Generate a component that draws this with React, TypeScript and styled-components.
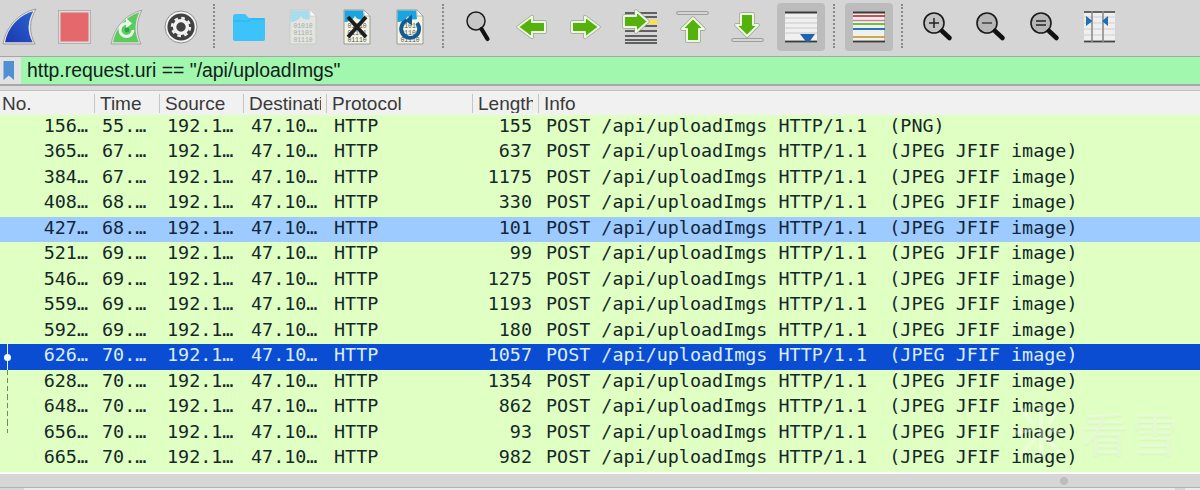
import React from 'react';
import styled, { createGlobalStyle } from 'styled-components';

const Global = createGlobalStyle`
  html, body { margin: 0; padding: 0; background: #d6d6d6; }
  #root { width: 1200px; height: 490px; overflow: hidden; }
`;

const Page = styled.div`
  position: relative;
  width: 1200px;
  height: 490px;
  overflow: hidden;
  display: flex;
  flex-direction: column;
  background: #d6d6d6;
  font-family: "Liberation Sans", Arial, sans-serif;
`;

const Toolbar = styled.div`
  height: 56px;
  box-sizing: border-box;
  padding: 3px 0 0 0;
  display: flex;
  align-items: flex-start;
  background: #d5d5d5;
  margin-left: -4px;
  width: 1204px;
`;

const Group = styled.div`
  display: flex;
  gap: 5.65px;
`;

const Slot = styled.div<{ $active?: boolean }>`
  width: 48px;
  height: 48px;
  border-radius: 4px;
  background: ${p => (p.$active ? '#bcbcbc' : 'transparent')};
  svg { display: block; }
`;

const Separator = styled.div`
  width: 0;
  height: 44px;
  margin: 1px 10.5px 0 8px;
  border-left: 2px dotted #8a8a8a;
`;

const FilterBar = styled.div`
  height: 27px;
  display: flex;
  align-items: stretch;
  border-top: 1px solid #a6a6a6;
  border-bottom: 2px solid #a8a8a8;
  background: #e2e2e2;
`;

const Bookmark = styled.div`
  width: 21px;
  padding: 3px 0 0 3px;
  box-sizing: border-box;
`;

const FilterInput = styled.div`
  flex: 1;
  background: #a2f7ae;
  color: #10201a;
  font-size: 19.4px;
  line-height: 27px;
  padding-left: 6px;
  white-space: pre;
`;

const Spacer = styled.div`
  height: 5px;
  background: #dcdcdc;
  border-bottom: 1px solid #c4c4c4;
  box-sizing: border-box;
`;

const columns = '94px 65px 84px 83px 146px 66px 1fr';

const Header = styled.div`
  height: 24px;
  display: grid;
  grid-template-columns: ${columns};
  background: #f1f1f1;
  color: #3a3a3a;
  font-size: 19px;
`;

const HeaderCell = styled.div<{ $first?: boolean }>`
  box-sizing: border-box;
  padding: 0 5px 0 ${p => (p.$first ? 2 : 5)}px;
  border-left: ${p => (p.$first ? 'none' : '1px solid #c6c6c6')};
  height: 19px;
  margin-top: 3px;
  line-height: 19px;
  min-width: 0;
`;

const HeaderLabel = styled.div`
  overflow: hidden;
  white-space: nowrap;
`;

const List = styled.div`
  height: 357px;
  display: flex;
  flex-direction: column;
  background: #e0ffc3;
`;

type Tone = 'plain' | 'light' | 'dark';

const rowBg: Record<Tone, string> = { plain: '#e0ffc3', light: '#9dcbff', dark: '#0a4cd2' };
const rowFg: Record<Tone, string> = { plain: '#14282a', light: '#12263a', dark: '#dcecff' };

const Row = styled.div<{ $tone: Tone }>`
  position: relative;
  flex: 0 0 25.47px;
  display: grid;
  grid-template-columns: ${columns};
  background: ${p => rowBg[p.$tone]};
  color: ${p => rowFg[p.$tone]};
  font-family: "DejaVu Sans Mono", "Liberation Mono", monospace;
  font-size: 18.4px;
  line-height: 22px;
  white-space: pre;
`;

const Cell = styled.div<{ $right?: boolean }>`
  text-align: ${p => (p.$right ? 'right' : 'left')};
  padding-left: ${p => (p.$right ? 0 : 8)}px;
  padding-right: ${p => (p.$right ? 6 : 0)}px;
  min-width: 0;
`;

const Link = styled.div<{ $dashed?: boolean; $short?: boolean }>`
  position: absolute;
  left: 7px;
  top: 0;
  width: 1px;
  height: ${p => (p.$short ? '50%' : '100%')};
  background: ${p =>
    p.$dashed
      ? 'repeating-linear-gradient(to bottom, #6f8a6a 0 5px, transparent 5px 8px)'
      : '#e8f2ff'};
`;

const Dot = styled.div`
  position: absolute;
  left: 4px;
  top: 10px;
  width: 7px;
  height: 7px;
  border-radius: 50%;
  background: #f4f8ff;
`;

const Edge = styled.div`
  height: 2px;
  background: #fafafa;
`;

const Scrollbar = styled.div`
  height: 13px;
  background: #d6d6d6;
  display: flex;
  justify-content: center;
  align-items: center;
  padding-left: 928px;
`;

const Thumb = styled.div`
  width: 8px;
  height: 8px;
  border-radius: 50%;
  background: #bdbdbd;
`;

const Footer = styled.div`
  flex: 1;
  display: flex;
  border-top: 1px solid #b4b4b4;
  background: #d6d6d6;
`;

const FooterPanel = styled.div`
  margin-left: 24px;
  flex: 1;
  background: #ececec;
`;

const FooterGap = styled.div`
  width: 10px;
  background: #d6d6d6;
`;

const FooterEnd = styled.div`
  width: 15px;
  background: #ececec;
`;

const Watermark = styled.div`
  position: absolute;
  left: 1012px;
  top: 402px;
  display: flex;
  align-items: center;
  gap: 12px;
  color: rgba(255, 255, 255, 0.36);
  font-family: "Noto Sans CJK SC", sans-serif;
  font-size: 46px;
  line-height: 58px;
  letter-spacing: 4px;
  text-shadow: 0 1px 2px rgba(60, 90, 40, 0.06);
  pointer-events: none;
`;

const Svg: React.FC<{ children: React.ReactNode }> = ({ children }) => (
  <svg width="48" height="48" viewBox="0 0 48 48" fill="none" xmlns="http://www.w3.org/2000/svg">
    {children}
  </svg>
);

const Lens: React.FC<{ fill: string; mark?: React.ReactNode }> = ({ fill, mark }) => (
  <Svg>
    <circle cx="20" cy="20" r="10" fill={fill} stroke="#1a1a1a" strokeWidth="1.6" />
    <path d="M28 28 L35.5 35" stroke="#111" strokeWidth="4.6" strokeLinecap="round" />
    {mark}
  </Svg>
);

const GreenArrow: React.FC<{ d: string }> = ({ d }) => (
  <>
    <path d={d} stroke="#97a58b" strokeWidth="3.4" strokeLinejoin="round" />
    <path d={d} fill="#55b20c" stroke="#eef7e2" strokeWidth="2" strokeLinejoin="round" />
  </>
);

const FileIcon: React.FC<{ top: string; faded?: boolean; children?: React.ReactNode }> = ({ top, faded, children }) => (
  <>
    <path d="M11 7 H31 L37 13 V41 H11 Z" fill={faded ? '#e3e5e1' : '#f3f3e4'} stroke={faded ? '#c9cbc7' : '#9b9b92'} strokeWidth="1" />
    <path d="M11.5 7.5 H30 L31 16 C27 17 24 17 22 13 C20 17 15 19 11.5 19 Z" fill={top} />
    <path d="M31 7 V13 H37 Z" fill="#fff" stroke={faded ? '#c9cbc7' : '#9b9b92'} strokeWidth="0.7" />
    <text x="24" y="24.5" textAnchor="middle" fontSize="6.4" fontFamily="Liberation Mono, monospace" fill={faded ? '#a9aca8' : '#555'}>01010</text>
    <text x="24" y="31.5" textAnchor="middle" fontSize="6.4" fontFamily="Liberation Mono, monospace" fill={faded ? '#a9aca8' : '#555'}>01101</text>
    <text x="24" y="38.5" textAnchor="middle" fontSize="6.4" fontFamily="Liberation Mono, monospace" fill={faded ? '#a9aca8' : '#555'}>01110</text>
    {children}
  </>
);

const Fin = () => (
  <Svg>
    <defs>
      <linearGradient id="fin" x1="0" y1="1" x2="1" y2="0">
        <stop offset="0" stopColor="#1c36ad" />
        <stop offset="1" stopColor="#2a66d6" />
      </linearGradient>
    </defs>
    <path d="M8 40 C11 24 22 11 39 7 C32 18 32 30 38 40 Z" fill="url(#fin)" stroke="#e6e6e6" strokeWidth="1.6" strokeLinejoin="round" />
    <path d="M7 41 C10 24 22 10 40 6 C33 18 33 30 39 41 Z" stroke="#8e8e8e" strokeWidth="0.8" strokeLinejoin="round" />
  </Svg>
);

const Stop = () => (
  <Svg>
    <rect x="9.5" y="8.5" width="30" height="31" fill="#e5686c" stroke="#dcdcdc" strokeWidth="2" />
    <rect x="8.5" y="7.5" width="32" height="33" stroke="#a8a8a8" strokeWidth="0.8" />
  </Svg>
);

const RestartFin = () => (
  <Svg>
    <path d="M9 40 C12 25 21 13 38 8 C32 19 32 30 37 40 Z" fill="#5ccb5e" stroke="#e0e0e0" strokeWidth="1.6" strokeLinejoin="round" />
    <path d="M8 41 C11 25 21 12 39 7 C33 19 33 30 38 41 Z" stroke="#9a9a9a" strokeWidth="0.8" strokeLinejoin="round" />
    <path d="M30 27 A6.5 6.5 0 1 1 24 20.5" stroke="#e9f7e6" strokeWidth="3" />
    <path d="M23 15 L29 20.5 L23 25.5 Z" fill="#e9f7e6" />
    <circle cx="24" cy="27" r="2.4" fill="#2fa24a" />
  </Svg>
);

const Gear = () => (
  <Svg>
    <circle cx="24" cy="24" r="16" fill="#f4f4f4" stroke="#8f8f8f" strokeWidth="1" />
    <circle cx="24" cy="24" r="13.6" fill="#414141" />
    <circle cx="24" cy="24" r="6.4" stroke="#f2f2f2" strokeWidth="3.4" />
    <circle cx="24" cy="24" r="9" stroke="#f2f2f2" strokeWidth="2.4" strokeDasharray="3.6 3.47" />
  </Svg>
);

const Folder = () => (
  <Svg>
    <path d="M8 14 Q8 11 11 11 H20 L24 15 H38 Q40 15 40 17 V36 Q40 38 38 38 H10 Q8 38 8 36 Z" fill="#3cc3f9" />
    <path d="M8 18 H24 L26 16 H40" stroke="#2aa9e4" strokeWidth="0.8" />
  </Svg>
);

const Capture = () => (
  <Svg>
    <FileIcon top="#a9dcec" faded />
  </Svg>
);

const CloseFile = () => (
  <Svg>
    <FileIcon top="#1aa4e0">
      <path d="M15 14 L33 34 M33 14 L15 34" stroke="#1d1d1d" strokeWidth="3.8" />
    </FileIcon>
  </Svg>
);

const ReloadFile = () => (
  <Svg>
    <FileIcon top="#1aa4e0">
      <path d="M20.5 17.6 A9 9 0 1 0 31 20" stroke="#125c96" strokeWidth="3.8" />
      <path d="M26 11.5 L19 17.5 L26 22.5 Z" fill="#125c96" />
    </FileIcon>
  </Svg>
);

const LinesIcon: React.FC<{ ys: [number, string, number][] }> = ({ ys }) => (
  <>
    {ys.map(([y, c, w], i) => (
      <path key={i} d={`M8 ${y} H40`} stroke={c} strokeWidth={w} />
    ))}
  </>
);

const Icons: Record<string, React.ReactNode> = {
  fin: <Fin />,
  stop: <Stop />,
  restart: <RestartFin />,
  gear: <Gear />,
  folder: <Folder />,
  capture: <Capture />,
  close: <CloseFile />,
  reload: <ReloadFile />,
  find: (
    <Svg>
      <circle cx="21" cy="18" r="9" fill="#c6c6c6" stroke="#1b1b1b" strokeWidth="1.5" />
      <path d="M26.5 26 L32.5 36" stroke="#111" strokeWidth="4.2" strokeLinecap="round" />
    </Svg>
  ),
  prev: (
    <Svg>
      <GreenArrow d="M10 24 L24 13.5 V19 H37 V29 H24 V34.5 Z" />
    </Svg>
  ),
  next: (
    <Svg>
      <GreenArrow d="M37 24 L23 13.5 V19 H10 V29 H23 V34.5 Z" />
    </Svg>
  ),
  jump: (
    <Svg>
      <path d="M9 10 H41 M9 14 H41 M9 23 H41 M9 28 H41 M9 33 H41 M9 37 H41 M9 40 H41" stroke="#3a3a3a" strokeWidth="1.6" />
      <path d="M33 19 H41" stroke="#ffe23a" strokeWidth="4" />
      <GreenArrow d="M32 18.5 L20 8 V13 H8 V24 H20 V29 Z" />
    </Svg>
  ),
  first: (
    <Svg>
      <path d="M9 10 H38" stroke="#8a8a8a" strokeWidth="3.4" strokeLinecap="round" />
      <path d="M9 10 H38" stroke="#efefef" strokeWidth="1.6" strokeLinecap="round" />
      <GreenArrow d="M24 15 L35 26 H30 V38 H18 V26 H13 Z" />
    </Svg>
  ),
  last: (
    <Svg>
      <path d="M10 37 H39" stroke="#8a8a8a" strokeWidth="3.4" strokeLinecap="round" />
      <path d="M10 37 H39" stroke="#efefef" strokeWidth="1.6" strokeLinecap="round" />
      <GreenArrow d="M24 33 L13 22 H18 V11 H30 V22 H35 Z" />
    </Svg>
  ),
  autoscroll: (
    <Svg>
      <rect x="8" y="9" width="32" height="30" fill="#f0f0f0" />
      <LinesIcon
        ys={[
          [9.5, '#3a3a3a', 2],
          [15, '#c8c8c8', 1],
          [20, '#c8c8c8', 1],
          [25, '#c8c8c8', 1],
          [30, '#c8c8c8', 1],
          [38.5, '#3a3a3a', 1.8],
        ]}
      />
      <path d="M23 31 H38 L33 38 Q31 40 28.5 38 Z" fill="#1f63ad" />
    </Svg>
  ),
  colorize: (
    <Svg>
      <rect x="8" y="9" width="31" height="30" fill="#f0f0f0" />
      <LinesIcon
        ys={[
          [9.5, '#3a3a3a', 2],
          [13, '#d03a3a', 1.8],
          [17.5, '#d878a8', 1.4],
          [21, '#55c21d', 1.8],
          [26, '#2a72b8', 2],
          [34, '#c9a13a', 1.8],
          [38.5, '#3a3a3a', 1.8],
        ]}
      />
    </Svg>
  ),
  zoomIn: (
    <Lens
      fill="#c2c2c2"
      mark={<path d="M15 20 H25 M20 15 V25" stroke="#222" strokeWidth="1.5" />}
    />
  ),
  zoomOut: <Lens fill="#b6b6b6" mark={<path d="M15 20 H25" stroke="#444" strokeWidth="1.6" />} />,
  zoomReset: (
    <Lens fill="#b6b6b6" mark={<path d="M15 18 H25 M15 22 H25" stroke="#222" strokeWidth="1.7" />} />
  ),
  resize: (
    <Svg>
      <rect x="9" y="8" width="31" height="31" fill="#efefef" />
      <path d="M9 9 H40" stroke="#555" strokeWidth="1.8" />
      <path d="M9 14 H40 M9 20 H40 M9 26 H40 M9 32 H40" stroke="#cfcfcf" strokeWidth="1" />
      <path d="M9 38.5 H40" stroke="#444" strokeWidth="1.8" />
      <path d="M17 8 V39 M28 8 V39" stroke="#8c8c8c" strokeWidth="1.6" />
      <path d="M11 13 L17.5 18 L11 23 Z M33 13 L27 18 L33 23 Z" fill="#1f6fb3" />
    </Svg>
  ),
};

const groups: { id: string; active?: boolean }[][] = [
  [{ id: 'fin' }, { id: 'stop' }, { id: 'restart' }, { id: 'gear' }],
  [{ id: 'folder' }, { id: 'capture' }, { id: 'close' }, { id: 'reload' }],
  [
    { id: 'find' },
    { id: 'prev' },
    { id: 'next' },
    { id: 'jump' },
    { id: 'first' },
    { id: 'last' },
    { id: 'autoscroll', active: true },
  ],
  [{ id: 'colorize', active: true }],
  [{ id: 'zoomIn' }, { id: 'zoomOut' }, { id: 'zoomReset' }, { id: 'resize' }],
];

const headers = ['No.', 'Time', 'Source', 'Destination', 'Protocol', 'Length', 'Info'];

const jpeg = 'POST /api/uploadImgs HTTP/1.1  (JPEG JFIF image)';
const rows: { no: string; time: string; len: string; info?: string; tone?: Tone }[] = [
  { no: '156…', time: '55.…', len: '155', info: 'POST /api/uploadImgs HTTP/1.1  (PNG)' },
  { no: '365…', time: '67.…', len: '637' },
  { no: '384…', time: '67.…', len: '1175' },
  { no: '408…', time: '68.…', len: '330' },
  { no: '427…', time: '68.…', len: '101', tone: 'light' },
  { no: '521…', time: '69.…', len: '99' },
  { no: '546…', time: '69.…', len: '1275' },
  { no: '559…', time: '69.…', len: '1193' },
  { no: '592…', time: '69.…', len: '180' },
  { no: '626…', time: '70.…', len: '1057', tone: 'dark' },
  { no: '628…', time: '70.…', len: '1354' },
  { no: '648…', time: '70.…', len: '862' },
  { no: '656…', time: '70.…', len: '93' },
  { no: '665…', time: '70.…', len: '982' },
];

export default function App() {
  return (
    <Page>
      <Global />
      <Toolbar>
        {groups.map((g, i) => (
          <React.Fragment key={i}>
            {i > 0 && <Separator />}
            <Group>
              {g.map(b => (
                <Slot key={b.id} $active={b.active}>
                  {Icons[b.id]}
                </Slot>
              ))}
            </Group>
          </React.Fragment>
        ))}
      </Toolbar>
      <FilterBar>
        <Bookmark>
          <svg width="12" height="21" viewBox="0 0 12 21">
            <path d="M0.5 1 H11 V20 L5.8 15.5 L0.5 20 Z" fill="#4f8fd4" />
          </svg>
        </Bookmark>
        <FilterInput>http.request.uri == "/api/uploadImgs"</FilterInput>
      </FilterBar>
      <Spacer />
      <Header>
        {headers.map((h, i) => (
          <HeaderCell key={h} $first={i === 0}>
            <HeaderLabel>{h}</HeaderLabel>
          </HeaderCell>
        ))}
      </Header>
      <List>
        {rows.map((r, i) => {
          const tone = r.tone ?? 'plain';
          return (
            <Row key={r.no} $tone={tone}>
              {i === 9 && (
                <>
                  <Link />
                  <Dot />
                </>
              )}
              {i > 9 && i < 13 && <Link $dashed $short={i === 12} />}
              <Cell $right>{r.no}</Cell>
              <Cell>{r.time}</Cell>
              <Cell>192.1…</Cell>
              <Cell>47.10…</Cell>
              <Cell>HTTP</Cell>
              <Cell $right>{r.len}</Cell>
              <Cell>{r.info ?? jpeg}</Cell>
            </Row>
          );
        })}
      </List>
      <Edge />
      <Scrollbar>
        <Thumb />
      </Scrollbar>
      <Footer>
        <FooterPanel />
        <FooterGap />
        <FooterEnd />
      </Footer>
      <Watermark>
        <svg width="58" height="56" viewBox="0 0 58 56" fill="none" stroke="rgba(255,255,255,0.34)" strokeWidth="4">
          <path d="M29 2 V54 M10 6 L22 22 M48 4 L36 22 M4 30 L20 26 M54 32 L38 26 M10 50 L24 34 M48 50 L34 34" />
        </svg>
        <span>看雪</span>
      </Watermark>
    </Page>
  );
}
